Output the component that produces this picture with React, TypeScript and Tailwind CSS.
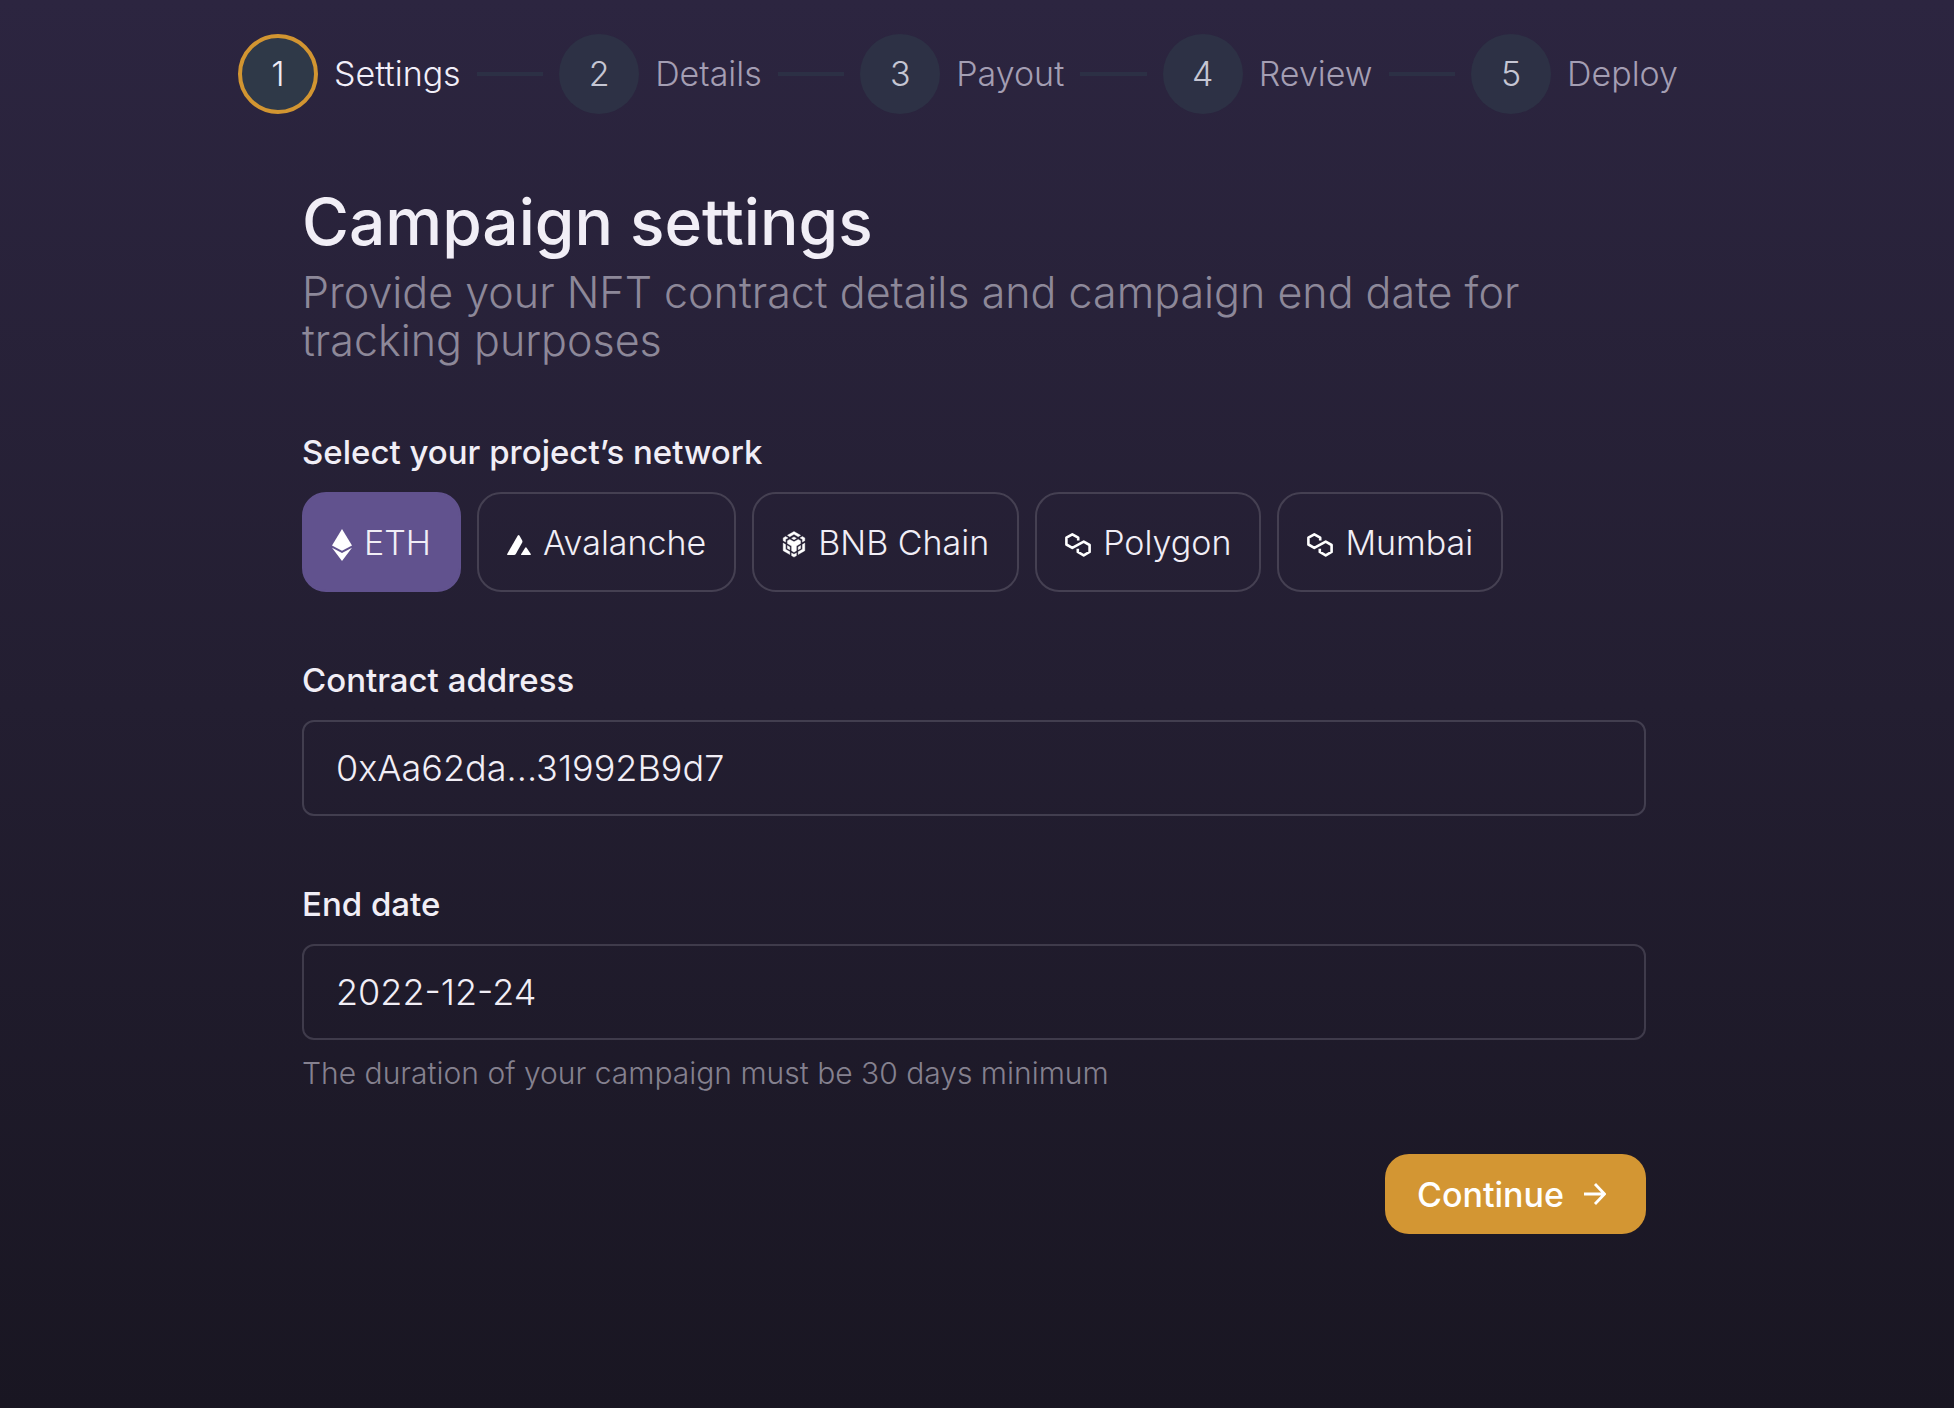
import { useState } from 'react';
import type { ReactNode } from 'react';

interface Network {
  id: string;
  name: string;
  icon: ReactNode;
}

const steps = ['Settings', 'Details', 'Payout', 'Review', 'Deploy'];

function EthIcon() {
  return (
    <svg className="w-5 h-8" viewBox="0 0 20 32" fill="currentColor" aria-hidden="true">
      <path d="M10 0 20 16.6 10 21.8 0 16.6Z" />
      <path d="M0 18.8 10 24 20 18.8 10 32Z" />
    </svg>
  );
}

function AvalancheIcon() {
  return (
    <svg className="w-6 h-5" viewBox="0 0 24 20" fill="currentColor" aria-hidden="true">
      <path d="M10.8.6Q11.6-.4 12.4.6L15.2 5.6Q15.7 6.6 15.2 7.6L8.8 19Q8.2 20 7 20H1Q-.3 20 .3 18.8Z" />
      <path d="M18.2 12.7Q18.9 11.8 19.6 12.7L23.6 18.8Q24.2 20 23 20H14.9Q13.6 20 14.2 18.9Z" />
    </svg>
  );
}

function BnbIcon() {
  return (
    <svg
      className="w-6 h-7"
      viewBox="0 0 24 27"
      fill="currentColor"
      stroke="currentColor"
      strokeWidth="0.4"
      aria-hidden="true"
    >
      <path d="M12 0 18.6 3.8 16.2 5.2 12 2.8 7.8 5.2 5.4 3.8Z" />
      <path d="M12 5.4 14.4 6.8 12 8.2 9.6 6.8Z" />
      <path d="M7.8 7.9 12 10.3 16.2 7.9 18.6 9.3V12L14.4 14.5V19.3L12 20.7 9.6 19.3V14.5L5.4 12V9.3Z" />
      <path d="M3.6 5 6 6.4 3.6 7.8V10.6L1.2 9.2V6.4Z" />
      <path d="M20.4 5 22.8 6.4V9.2L20.4 10.6V7.8L18 6.4Z" />
      <path d="M1.2 11.6 3.6 13V17.8L7.8 20.2V23L1.2 19.2Z" />
      <path d="M22.8 11.6 20.4 13V17.8L16.2 20.2V23L22.8 19.2Z" />
      <path d="M5.4 14.1 7.8 15.5V18.3L5.4 16.9Z" />
      <path d="M18.6 14.1 16.2 15.5V18.3L18.6 16.9Z" />
      <path d="M9.6 21.4 12 22.8 14.4 21.4V24.2L12 25.6 9.6 24.2Z" />
    </svg>
  );
}

function PolygonIcon() {
  return (
    <svg
      className="w-[26px] h-6"
      viewBox="0 0 26 24"
      fill="none"
      stroke="currentColor"
      strokeWidth="2.6"
      strokeLinejoin="round"
      aria-hidden="true"
    >
      <path d="M13.2 7.4V4.7L7.3 1.4 1.4 4.7V11.5L7.3 14.9 18.7 8.6 24.6 12V18.9L18.7 22.4 12.8 18.9V15.8" />
    </svg>
  );
}

function ArrowIcon() {
  return (
    <svg
      className="w-[22px] h-[22px]"
      viewBox="0 0 22 22"
      fill="none"
      stroke="currentColor"
      strokeWidth="2.8"
      aria-hidden="true"
    >
      <path d="M0 11H20M11 1 20.5 11 11 21" />
    </svg>
  );
}

const networks: Network[] = [
  { id: 'eth', name: 'ETH', icon: <EthIcon /> },
  { id: 'avalanche', name: 'Avalanche', icon: <AvalancheIcon /> },
  { id: 'bnb', name: 'BNB Chain', icon: <BnbIcon /> },
  { id: 'polygon', name: 'Polygon', icon: <PolygonIcon /> },
  { id: 'mumbai', name: 'Mumbai', icon: <PolygonIcon /> },
];

function Stepper({ current }: { current: number }) {
  return (
    <ol className="flex items-center gap-4 max-w-[1440px] text-[34px] leading-10 font-light">
      {steps.map((step, index) => {
        const active = index === current;
        const last = index === steps.length - 1;
        return (
          <li
            key={step}
            aria-current={active ? 'step' : undefined}
            className={last ? 'flex items-center gap-4' : 'flex flex-auto items-center gap-4'}
          >
            <span
              className={
                active
                  ? 'flex shrink-0 items-center justify-center w-20 h-20 rounded-full border-4 border-[#d29531] bg-[#2f3948] text-[#efecf6]'
                  : 'flex shrink-0 items-center justify-center w-20 h-20 rounded-full bg-[#2d3145] text-[#c5c6d3]'
              }
            >
              {index + 1}
            </span>
            <span className={active ? 'text-[#f2eff9]' : 'text-[#a49eb3]'}>{step}</span>
            {!last && <span className="flex-1 h-1 bg-[#2c3045]" />}
          </li>
        );
      })}
    </ol>
  );
}

export default function App() {
  const [network, setNetwork] = useState('eth');
  const [address, setAddress] = useState('0xAa62da...31992B9d7');
  const [endDate, setEndDate] = useState('2022-12-24');

  return (
    <div className="min-h-screen pr-1.5 bg-linear-to-b from-[#2c2540] via-[#231e31] to-[#191622] font-['Inter',sans-serif] text-[#f1eef6]">
      <main className="mx-auto w-full max-w-[1472px] pt-[34px] pb-16">
        <Stepper current={0} />

        <form className="px-16 pt-17" onSubmit={(e) => e.preventDefault()}>
          <h1 className="mb-1.5 text-[64px] leading-20 font-medium">Campaign settings</h1>
          <p className="text-[43px] leading-12 font-light text-[#8d8899]">
            Provide your NFT contract details and campaign end date for tracking purposes
          </p>

          <fieldset className="mt-16">
            <legend className="mb-4 text-[33px] leading-12 font-medium">
              Select your project’s network
            </legend>
            <div className="flex flex-wrap gap-4">
              {networks.map((item) => (
                <button
                  key={item.id}
                  type="button"
                  aria-pressed={network === item.id}
                  onClick={() => setNetwork(item.id)}
                  className={
                    network === item.id
                      ? 'flex items-center gap-3 h-[100px] px-7 rounded-3xl border-2 border-[#61528e] bg-[#61528e] text-[34px] font-light'
                      : 'flex items-center gap-3 h-[100px] px-7 rounded-3xl border-2 border-[#454052] text-[34px] font-light'
                  }
                >
                  <span className="pt-1.5 text-white">{item.icon}</span>
                  {item.name}
                </button>
              ))}
            </div>
          </fieldset>

          <div className="mt-16 flex flex-col gap-4">
            <label htmlFor="address" className="text-[33px] leading-12 font-medium">
              Contract address
            </label>
            <input
              id="address"
              type="text"
              value={address}
              onChange={(e) => setAddress(e.target.value)}
              className="w-full h-24 px-8 rounded-xl border-2 border-[#423e4f] text-[36px] font-light outline-none"
            />
          </div>

          <div className="mt-16 flex flex-col gap-4">
            <label htmlFor="end-date" className="text-[33px] leading-12 font-medium">
              End date
            </label>
            <input
              id="end-date"
              type="text"
              value={endDate}
              onChange={(e) => setEndDate(e.target.value)}
              aria-describedby="end-date-hint"
              className="w-full h-24 px-8 rounded-xl border-2 border-[#3f3b4b] text-[36px] font-light outline-none"
            />
            <p id="end-date-hint" className="text-[30px] leading-[34px] font-light text-[#85818f]">
              The duration of your campaign must be 30 days minimum
            </p>
          </div>

          <div className="mt-16 flex justify-end">
            <button
              type="submit"
              className="flex items-center gap-5 h-20 pl-8 pr-10 rounded-3xl bg-[#d39633] text-[34px] font-medium text-white"
            >
              Continue
              <ArrowIcon />
            </button>
          </div>
        </form>
      </main>
    </div>
  );
}
